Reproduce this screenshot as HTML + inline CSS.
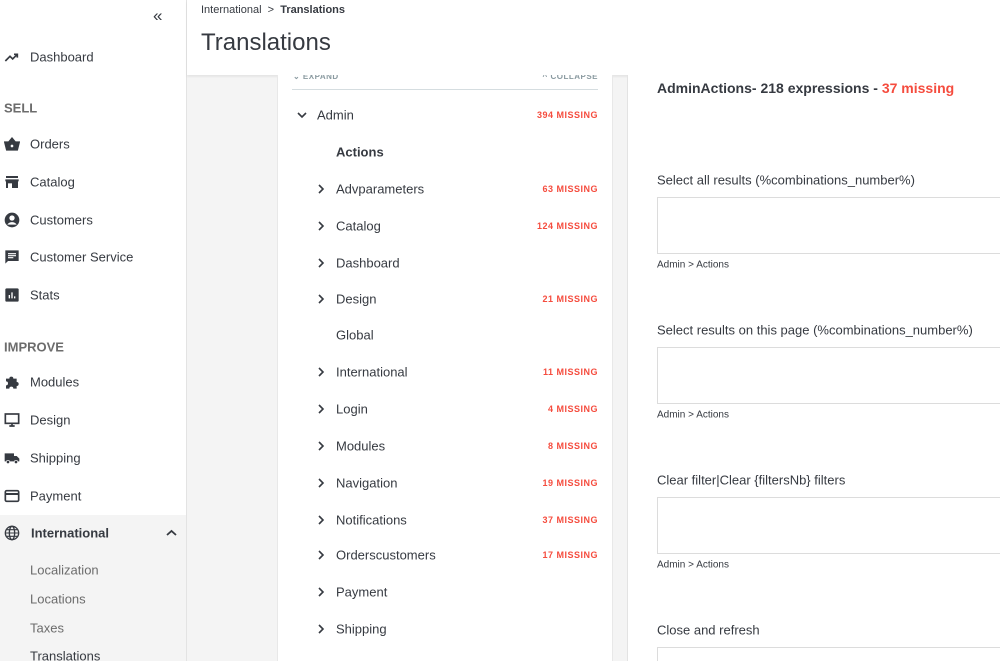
<!DOCTYPE html>
<html style="width:1000px;height:661px;overflow:hidden"><head><meta charset="utf-8"><style>
*{margin:0;padding:0;box-sizing:border-box}
body{width:1000px;height:661px;overflow:hidden;font-family:"Liberation Sans",sans-serif;background:#f4f4f4;position:relative;color:#363a41}
.abs{position:absolute;white-space:nowrap}
#side{position:absolute;left:0;top:0;width:187px;height:661px;background:#fff;border-right:1px solid #e3e3e3;overflow:hidden}
.si{position:absolute;left:30px;font-size:13px;color:#363a41;transform:translateY(-50%)}
.ic{position:absolute;left:4px;width:16px;height:16px;transform:translateY(-50%)}
.sec{position:absolute;left:4px;font-size:13px;font-weight:bold;color:#6c6c6c;transform:translateY(-50%)}
.sub{position:absolute;left:30px;font-size:13px;color:#6c6c6c;transform:translateY(-50%)}
#hdr{position:absolute;left:187px;top:0;width:813px;height:75px;background:#fff;box-shadow:0 2px 2px rgba(0,0,0,.06)}
#tree{position:absolute;left:277px;top:75px;width:336px;height:586px;background:#fff;border-left:1px solid #e8e8e8;border-right:1px solid #e8e8e8;overflow:hidden}
.tr{position:absolute;font-size:13px;color:#363a41;transform:translateY(-50%)}
.ms{position:absolute;right:14px;font-size:9px;font-weight:bold;color:#f54c3e;letter-spacing:.5px;transform:translateY(-50%)}
.chev{position:absolute;left:38px;width:10px;height:10px;transform:translateY(-50%)}
#right{position:absolute;left:627px;top:75px;width:373px;height:586px;background:#fff;border-left:1px solid #e3e3e3;overflow:hidden}
.lab{position:absolute;left:29px;font-size:13px;color:#363a41;transform:translateY(-50%)}
.ta{position:absolute;left:29px;width:360px;height:57px;border:1px solid #dcdcdc;background:#fff}
.sm{position:absolute;left:29px;font-size:10px;color:#363a41;transform:translateY(-50%)}
</style></head><body>
<div id="side">
<div class="abs" style="left:153px;top:6px;font-size:17px;color:#363a41">«</div>
<svg class="ic" style="top:57px" viewBox="0 0 24 24"><path d="M2 18l7-7 4 4 7-7M15 8h5v5" stroke="#363a41" stroke-width="2.5" fill="none"/></svg>
<div class="si" style="top:57px">Dashboard</div>
<div class="sec" style="top:108px">SELL</div>
<svg class="ic" style="top:144px" viewBox="0 0 24 24"><path d="M1 9h22l-3 12H4z M7 9l5-6 5 6" fill="#363a41" stroke="#363a41" stroke-width="2"/><circle cx="12" cy="15" r="2" fill="#fff"/></svg>
<div class="si" style="top:144px">Orders</div>
<svg class="ic" style="top:182px" viewBox="0 0 24 24"><path d="M3 3h18v3H3zM2 8h20v3H2zM3 11h18v10H3z" fill="#363a41"/><rect x="6" y="14" width="6" height="7" fill="#fff"/></svg>
<div class="si" style="top:182px">Catalog</div>
<svg class="ic" style="top:220px" viewBox="0 0 24 24"><circle cx="12" cy="12" r="11" fill="#363a41"/><circle cx="12" cy="9" r="4" fill="#fff"/><path d="M5 19c3-5 11-5 14 0" fill="#fff"/></svg>
<div class="si" style="top:220px">Customers</div>
<svg class="ic" style="top:257px" viewBox="0 0 24 24"><path d="M2 2h20v16H6l-4 4z" fill="#363a41"/><path d="M6 7h12M6 10h12M6 13h8" stroke="#fff" stroke-width="1.6"/></svg>
<div class="si" style="top:257px">Customer Service</div>
<svg class="ic" style="top:295px" viewBox="0 0 24 24"><rect x="2" y="2" width="20" height="20" rx="2" fill="#363a41"/><path d="M8 17v-5M12 17V8M16 17v-3" stroke="#fff" stroke-width="2"/></svg>
<div class="si" style="top:295px">Stats</div>
<div class="sec" style="top:347px">IMPROVE</div>
<svg class="ic" style="top:382px" viewBox="0 0 24 24"><path d="M3 7h5a3 3 0 1 1 6 0h5v5a3 3 0 1 1 0 6v4h-5a3 3 0 1 0-6 0H3v-5a3 3 0 1 0 0-6z" fill="#363a41"/></svg>
<div class="si" style="top:382px">Modules</div>
<svg class="ic" style="top:420px" viewBox="0 0 24 24"><rect x="2" y="3" width="20" height="14" fill="none" stroke="#363a41" stroke-width="2.5"/><path d="M8 21h8M12 17v4" stroke="#363a41" stroke-width="2.5"/></svg>
<div class="si" style="top:420px">Design</div>
<svg class="ic" style="top:458px" viewBox="0 0 24 24"><path d="M1 5h14v12H1zM15 9h4l4 4v4h-8z" fill="#363a41"/><circle cx="6" cy="18" r="2.5" fill="#363a41" stroke="#fff"/><circle cx="18" cy="18" r="2.5" fill="#363a41" stroke="#fff"/></svg>
<div class="si" style="top:458px">Shipping</div>
<svg class="ic" style="top:496px" viewBox="0 0 24 24"><rect x="2" y="4" width="20" height="16" rx="2" fill="none" stroke="#363a41" stroke-width="2.5"/><path d="M2 9h20" stroke="#363a41" stroke-width="3"/></svg>
<div class="si" style="top:496px">Payment</div>
<div style="position:absolute;left:0;top:515px;width:186px;height:146px;background:#f4f4f4"></div>
<svg class="ic" style="top:533px" viewBox="0 0 24 24"><circle cx="12" cy="12" r="10" fill="none" stroke="#363a41" stroke-width="2"/><ellipse cx="12" cy="12" rx="4" ry="10" fill="none" stroke="#363a41" stroke-width="2"/><path d="M2 12h20M4 7h16M4 17h16" stroke="#363a41" stroke-width="1.6"/></svg>
<div class="si" style="top:533px;left:31px;font-weight:bold">International</div>
<svg class="abs" style="left:166px;top:529px" width="11" height="8" viewBox="0 0 11 8"><path d="M1 6l4.5-4 4.5 4" stroke="#363a41" stroke-width="1.8" fill="none"/></svg>
<div class="sub" style="top:570px">Localization</div>
<div class="sub" style="top:599px">Locations</div>
<div class="sub" style="top:628px">Taxes</div>
<div class="sub" style="top:656px;color:#363a41">Translations</div>
</div>
<div id="hdr">
<div class="abs" style="left:14px;top:4px;font-size:11px;color:#363a41">International&nbsp; &gt; &nbsp;<b>Translations</b></div>
<div class="abs" style="left:14px;top:29px;font-size:24px;color:#363a41">Translations</div>
</div>
<div id="tree">
<div class="abs" style="left:15px;top:-3px;font-size:8px;font-weight:bold;color:#8a9aa0;letter-spacing:.5px">&#8964; EXPAND</div>
<div class="abs" style="right:14px;top:-3px;font-size:8px;font-weight:bold;color:#8a9aa0;letter-spacing:.5px">^ COLLAPSE</div>
<div style="position:absolute;left:14px;right:14px;top:14px;border-top:1px solid #d5dde0"></div>
<svg class="chev" style="left:19px;top:40px" viewBox="0 0 10 10"><path d="M1 3l4 4 4-4" stroke="#363a41" stroke-width="1.6" fill="none"/></svg>
<div class="tr" style="left:39px;top:40px">Admin</div><div class="ms" style="top:40px">394 MISSING</div>
<div class="tr" style="left:58px;top:77px;font-weight:bold">Actions</div>
<div id="rows"></div>
</div>
<div id="right">
<div class="abs" style="left:29px;top:5px;font-size:14px;font-weight:bold;color:#363a41">AdminActions- 218 expressions - <span style="color:#f54c3e">37 missing</span></div>
<div class="lab" style="top:105px">Select all results (%combinations_number%)</div>
<div class="ta" style="top:122px"></div>
<div class="sm" style="top:190px">Admin &gt; Actions</div>
<div class="lab" style="top:255px">Select results on this page (%combinations_number%)</div>
<div class="ta" style="top:272px"></div>
<div class="sm" style="top:340px">Admin &gt; Actions</div>
<div class="lab" style="top:405px">Clear filter|Clear {filtersNb} filters</div>
<div class="ta" style="top:422px"></div>
<div class="sm" style="top:490px">Admin &gt; Actions</div>
<div class="lab" style="top:555px">Close and refresh</div>
<div class="ta" style="top:572px"></div>
</div>
<script>
var r=[["Advparameters",114,"63"],["Catalog",151,"124"],["Dashboard",188,""],["Design",224,"21"],["Global",260,null],["International",297,"11"],["Login",334,"4"],["Modules",371,"8"],["Navigation",408,"19"],["Notifications",445,"37"],["Orderscustomers",480,"17"],["Payment",517,""],["Shipping",554,""]];
var h="";r.forEach(function(a){if(a[2]!==null)h+='<svg class="chev" style="top:'+a[1]+'px" viewBox="0 0 10 10"><path d="M3 1l4 4-4 4" stroke="#363a41" stroke-width="1.6" fill="none"/></svg>';
h+='<div class="tr" style="left:58px;top:'+a[1]+'px">'+a[0]+'</div>';if(a[2])h+='<div class="ms" style="top:'+a[1]+'px">'+a[2]+' MISSING</div>';});
document.getElementById("rows").innerHTML=h;
</script>
</body></html>
